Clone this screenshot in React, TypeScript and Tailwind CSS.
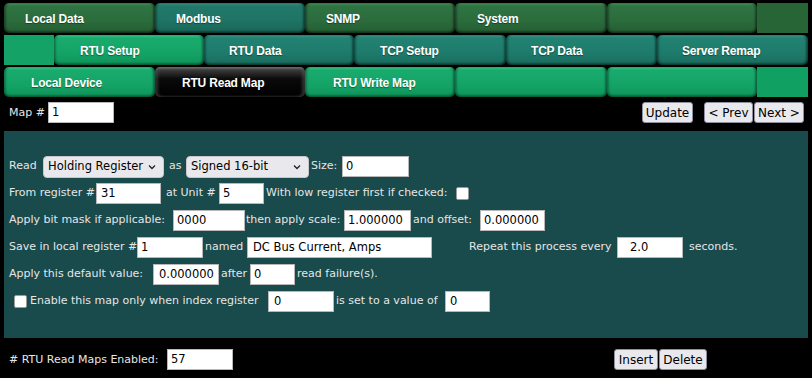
import React from "react";

type TabKind = "g1" | "t1" | "br" | "t2" | "sel" | "f1" | "f2" | "f3";

const kindClass: Record<TabKind, string> = {
  g1: "rounded-[5px] bg-[linear-gradient(to_bottom,#4a9a5e_0px,#2f7443_3px,#2b6b3c_60%,#235e32_100%)] shadow-[inset_2px_0_2px_rgba(0,0,0,0.3),inset_-2px_0_2px_rgba(0,0,0,0.4),inset_0_-2px_2px_rgba(0,0,0,0.3)]",
  t1: "rounded-[5px] bg-[linear-gradient(to_bottom,#3a9a88_0px,#22796a_3px,#1e7364_60%,#196656_100%)] shadow-[inset_2px_0_2px_rgba(0,0,0,0.3),inset_-2px_0_2px_rgba(0,0,0,0.4),inset_0_-2px_2px_rgba(0,0,0,0.3)]",
  br: "rounded-[5px] bg-[linear-gradient(to_bottom,#3fcf8f_0px,#19ab6d_3px,#14a366_60%,#0e9459_100%)] shadow-[inset_2px_0_2px_rgba(0,0,0,0.25),inset_-2px_0_2px_rgba(0,0,0,0.35),inset_0_-2px_2px_rgba(0,0,0,0.25)]",
  t2: "rounded-[5px] bg-[linear-gradient(to_bottom,#3fa08e_0px,#228272_3px,#1e7b6c_60%,#186c5d_100%)] shadow-[inset_2px_0_2px_rgba(0,0,0,0.3),inset_-2px_0_2px_rgba(0,0,0,0.4),inset_0_-2px_2px_rgba(0,0,0,0.3)]",
  sel: "rounded-[5px] bg-[linear-gradient(to_bottom,#7a7a7a_0px,#3a3a3a_3px,#0a0a0a_40%,#000000_100%)] shadow-[inset_3px_0_3px_rgba(90,90,90,0.5),inset_-3px_0_3px_rgba(90,90,90,0.5)]",
  f1: "bg-[#276536]",
  f2: "bg-[#15a267]",
  f3: "bg-[#10a061]",
};

function Tab({ w, kind, label, pl }: { w: string; kind: TabKind; label?: string; pl: string }) {
  return (
    <div className={`${w} h-full shrink-0 flex items-center pt-[1px] ${pl} ${kindClass[kind]}`}>
      {label && (
        <span className="text-white font-bold text-[12px] tracking-[-0.2px] whitespace-nowrap [font-family:'Liberation_Sans',Arial,sans-serif] [text-shadow:0_1px_1px_rgba(0,0,0,0.4)]">
          {label}
        </span>
      )}
    </div>
  );
}

function Input({ w, value, pl = "pl-[3px]" }: { w: string; value: string; pl?: string }) {
  return (
    <div
      className={`${w} h-[21px] shrink-0 bg-white border border-[#b8b8b8] flex items-center ${pl} text-[11.5px] text-black whitespace-nowrap overflow-hidden`}
    >
      {value}
    </div>
  );
}

function Select({ w, value }: { w: string; value: string }) {
  return (
    <div
      className={`${w} h-[22px] shrink-0 bg-[#e9e9ed] border border-[#c8c8cc] rounded-[4px] flex items-center justify-between pl-[4px] pr-[7px] text-[11.5px] text-black whitespace-nowrap`}
    >
      <span>{value}</span>
      <svg width="8" height="6" viewBox="0 0 8 6" className="shrink-0">
        <path d="M1 1.5 L4 4.5 L7 1.5" fill="none" stroke="#222" strokeWidth="1.3" />
      </svg>
    </div>
  );
}

function Btn({ w, label }: { w: string; label: string }) {
  return (
    <div
      className={`${w} h-[21px] shrink-0 bg-[#e9e9ed] border border-[#8f8f9d] rounded-[3px] flex items-center justify-center text-[12px] text-black`}
    >
      {label}
    </div>
  );
}

function Check() {
  return <div className="w-[13px] h-[13px] shrink-0 bg-white border border-[#9a9a9a] rounded-[2px]" />;
}

function L({ w, pl = "", children }: { w?: string; pl?: string; children: React.ReactNode }) {
  return <span className={`${w ?? ""} ${pl} shrink-0 whitespace-nowrap text-[11px] text-[#e6e6e6]`}>{children}</span>;
}

export default function App() {
  return (
    <div className="w-[812px] h-[378px] bg-black overflow-hidden [font-family:'DejaVu_Sans',Verdana,sans-serif]">
      <div className="pt-[3px] px-[4px] flex flex-col gap-[2px]">
        <div className="h-[30px] flex">
          <Tab w="w-[151px]" kind="g1" label="Local Data" pl="pl-[21px]" />
          <Tab w="w-[150px]" kind="t1" label="Modbus" pl="pl-[21px]" />
          <Tab w="w-[150px]" kind="g1" label="SNMP" pl="pl-[21px]" />
          <Tab w="w-[152px]" kind="g1" label="System" pl="pl-[22px]" />
          <Tab w="w-[150px]" kind="g1" pl="" />
          <Tab w="w-[51px]" kind="f1" pl="" />
        </div>
        <div className="h-[30px] flex">
          <Tab w="w-[50px]" kind="f2" pl="" />
          <Tab w="w-[150px]" kind="br" label="RTU Setup" pl="pl-[26px]" />
          <Tab w="w-[150px]" kind="t2" label="RTU Data" pl="pl-[25px]" />
          <Tab w="w-[152px]" kind="t2" label="TCP Setup" pl="pl-[26px]" />
          <Tab w="w-[151px]" kind="t2" label="TCP Data" pl="pl-[25px]" />
          <Tab w="w-[151px]" kind="t2" label="Server Remap" pl="pl-[25px]" />
        </div>
        <div className="h-[30px] flex">
          <Tab w="w-[151px]" kind="br" label="Local Device" pl="pl-[27px]" />
          <Tab w="w-[150px]" kind="sel" label="RTU Read Map" pl="pl-[27px]" />
          <Tab w="w-[150px]" kind="br" label="RTU Write Map" pl="pl-[28px]" />
          <Tab w="w-[152px]" kind="br" pl="" />
          <Tab w="w-[150px]" kind="br" pl="" />
          <Tab w="w-[51px]" kind="f3" pl="" />
        </div>
      </div>

      <div className="h-[34px] pt-[5px] pl-[9px] pr-[8px] flex items-start">
        <L w="w-[39px]" pl="pt-[3px]">Map #</L>
        <Input w="w-[66px]" value="1" />
        <div className="flex-1" />
        <Btn w="w-[51px]" label="Update" />
        <div className="w-[11px]" />
        <Btn w="w-[49px]" label="< Prev" />
        <div className="w-[1px]" />
        <Btn w="w-[50px]" label="Next >" />
      </div>

      <div className="mx-[4px] bg-[#194a4c] pt-[22px] pb-[23px] pl-[5px] flex flex-col">
        <div className="h-[27px] flex items-center">
          <L w="w-[34px]">Read</L>
          <Select w="w-[121px]" value="Holding Register" />
          <L w="w-[22px]" pl="pl-[5px]">as</L>
          <Select w="w-[123px]" value="Signed 16-bit" />
          <L w="w-[33px]" pl="pl-[2px]">Size:</L>
          <Input w="w-[67px]" value="0" />
        </div>
        <div className="h-[27px] flex items-center">
          <L w="w-[87px]">From register #</L>
          <Input w="w-[65px]" value="31" pl="pl-[4px]" />
          <L w="w-[58px]" pl="pl-[5px]">at Unit #</L>
          <Input w="w-[45px]" value="5" />
          <L w="w-[192px]" pl="pl-[2px]">With low register first if checked:</L>
          <Check />
        </div>
        <div className="h-[27px] flex items-center">
          <L w="w-[164px]">Apply bit mask if applicable:</L>
          <Input w="w-[72px]" value="0000" />
          <L w="w-[99px]" pl="pl-[1px]">then apply scale:</L>
          <Input w="w-[67px]" value="1.000000" />
          <L w="w-[69px]" pl="pl-[2px]">and offset:</L>
          <Input w="w-[65px]" value="0.000000" />
        </div>
        <div className="h-[27px] flex items-center">
          <L w="w-[128px]">Save in local register #</L>
          <Input w="w-[66px]" value="1" />
          <L w="w-[44px]" pl="pl-[2px]">named</L>
          <Input w="w-[185px]" value="DC Bus Current, Amps" pl="pl-[5px]" />
          <L w="w-[185px]" pl="pl-[37px]">Repeat this process every</L>
          <Input w="w-[66px]" value="2.0" pl="pl-[12px]" />
          <L pl="pl-[6px]">seconds.</L>
        </div>
        <div className="h-[27px] flex items-center">
          <L w="w-[144px]">Apply this default value:</L>
          <Input w="w-[66px]" value="0.000000" pl="pl-[5px]" />
          <L w="w-[31px]" pl="pl-[2px]">after</L>
          <Input w="w-[45px]" value="0" />
          <L pl="pl-[2px]">read failure(s).</L>
        </div>
        <div className="h-[27px] flex items-center">
          <div className="w-[5px] shrink-0" />
          <Check />
          <L w="w-[241px]" pl="pl-[3px]">Enable this map only when index register</L>
          <Input w="w-[66px]" value="0" pl="pl-[5px]" />
          <L w="w-[111px]" pl="pl-[2px]">is set to a value of</L>
          <Input w="w-[45px]" value="0" pl="pl-[4px]" />
        </div>
      </div>

      <div className="pt-[11px] pl-[9px] flex items-start">
        <L w="w-[158px]" pl="pt-[3px]">
          # RTU Read Maps Enabled:
        </L>
        <Input w="w-[66px]" value="57" />
        <div className="w-[381px] shrink-0" />
        <Btn w="w-[44px]" label="Insert" />
        <div className="w-[1px] shrink-0" />
        <Btn w="w-[48px]" label="Delete" />
      </div>
    </div>
  );
}
